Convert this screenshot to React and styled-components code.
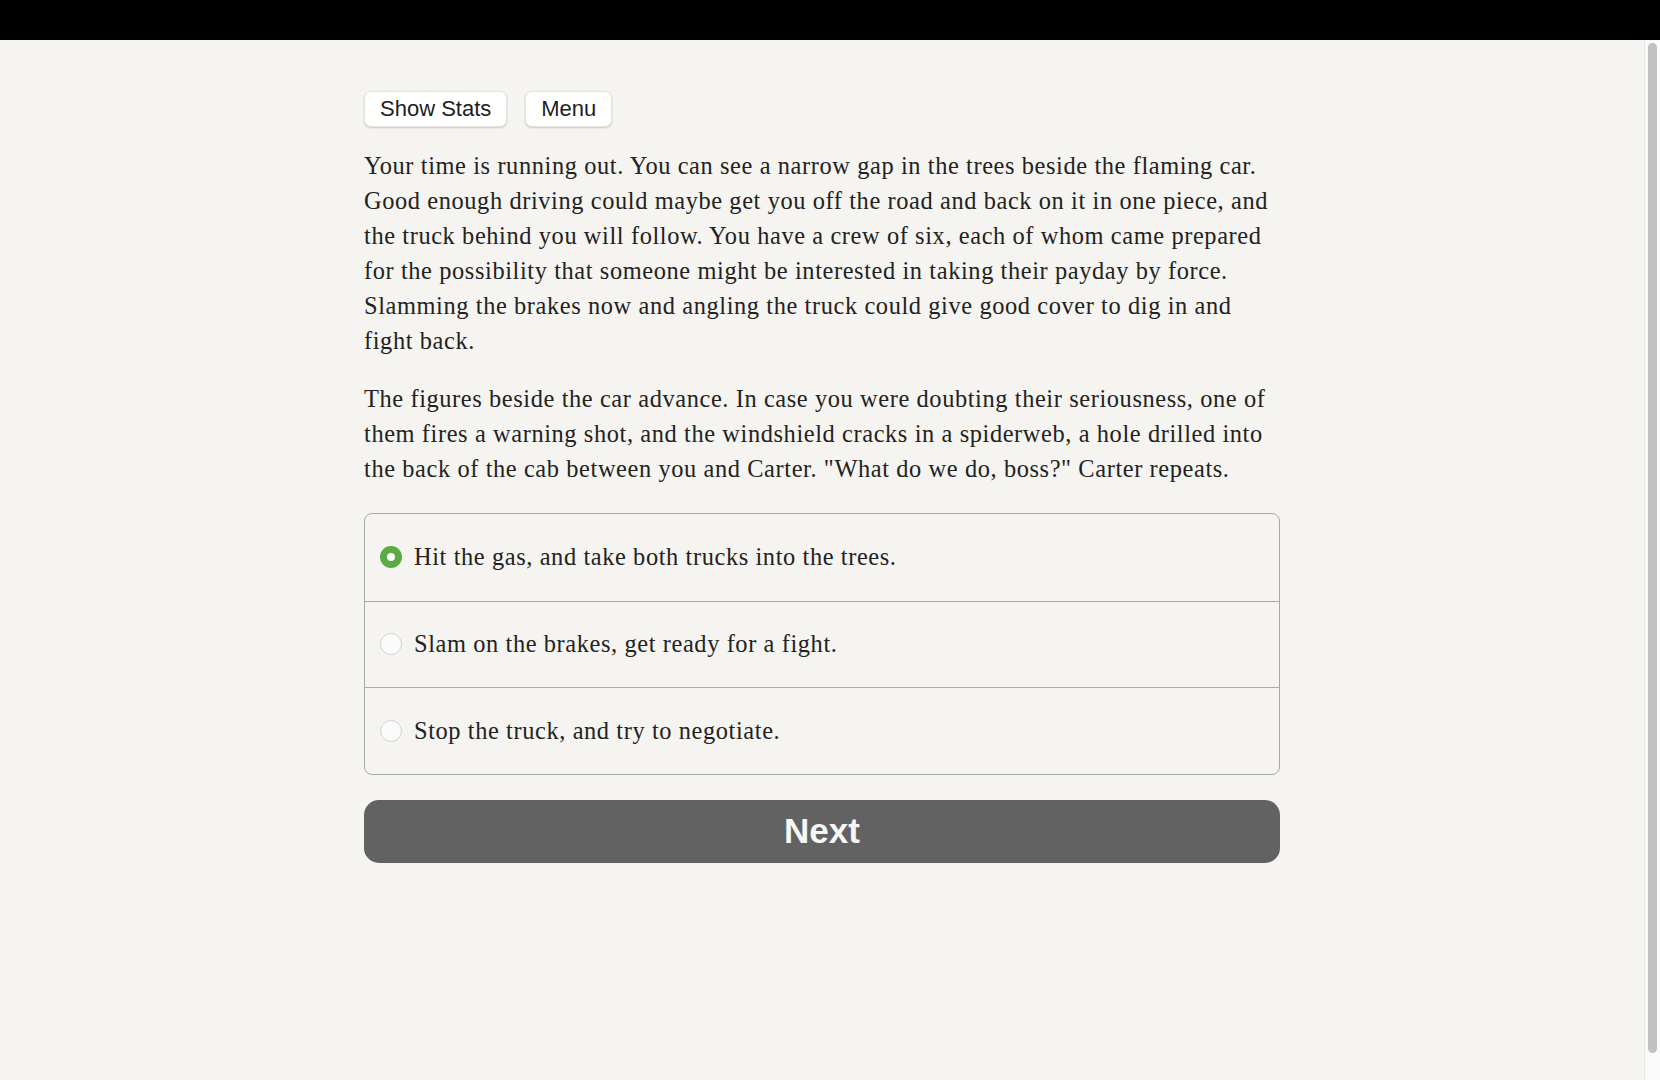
import React, { useState } from 'react';
import styled, { createGlobalStyle } from 'styled-components';

const GlobalStyle = createGlobalStyle`
  html, body {
    margin: 0;
    padding: 0;
    height: 100%;
    overflow: hidden;
    background: #000;
  }
  #root {
    height: 100%;
  }
`;

const Page = styled.div`
  display: flex;
  flex-direction: column;
  height: 100vh;
`;

const TopBar = styled.div`
  height: 40px;
  flex: none;
  background: #000;
`;

const Body = styled.div`
  flex: 1;
  display: flex;
  min-height: 0;
  background: #f5f4f0;
`;

const Scroller = styled.div`
  flex: 1;
  overflow: hidden;
`;

// drawn scrollbar, the headless browser hides native ones
const ScrollTrack = styled.div`
  width: 16px;
  flex: none;
  display: flex;
  box-sizing: border-box;
  padding: 3px 3px 27px 3px;
  background: #fafafa;
  border-left: 1px solid #e6e6e4;
`;

const ScrollThumb = styled.div`
  flex: 1;
  border-radius: 5px;
  background: #c1c1c1;
`;

const Column = styled.main`
  width: 916px;
  margin: 0 auto;
  padding-top: 51px;
  box-sizing: border-box;
`;

const Toolbar = styled.div`
  display: flex;
  gap: 18px;
  margin-bottom: 21px;
`;

const ToolButton = styled.button`
  height: 36px;
  padding: 0 15px;
  background: #fff;
  border: 1px solid #e4e3e0;
  border-radius: 7px;
  box-shadow: 0 1px 2px rgba(0, 0, 0, 0.18);
  font-family: "Liberation Sans", Arial, sans-serif;
  font-size: 22px;
  color: #1d1d1d;
  cursor: pointer;
`;

const Story = styled.div`
  font-family: "Liberation Serif", "Times New Roman", serif;
  font-size: 24.4px;
  letter-spacing: 0.6px;
  line-height: 35px;
  color: #222;
`;

const Para = styled.p`
  margin: 0 0 23px;
`;

const Choices = styled.div`
  border: 1px solid #a9a9a9;
  border-radius: 8px;
  margin-top: 27px;
  overflow: hidden;
`;

const Choice = styled.label`
  display: flex;
  align-items: center;
  gap: 12px;
  height: 86.5px;
  padding: 0 15px;
  box-sizing: border-box;
  cursor: pointer;
  font-family: "Liberation Serif", "Times New Roman", serif;
  font-size: 24.4px;
  letter-spacing: 0.6px;
  color: #222;

  & + & {
    border-top: 1px solid #a9a9a9;
  }
`;

const Radio = styled.span`
  width: 22px;
  height: 22px;
  flex: none;
  border-radius: 50%;
  box-sizing: border-box;
  background: ${p => (p.$checked ? '#fff' : '#fbfbfb')};
  border: ${p => (p.$checked ? '7px solid #5aab43' : '1px solid #d3d3d3')};
`;

const NextButton = styled.button`
  display: block;
  width: 100%;
  height: 63px;
  margin-top: 25px;
  border: none;
  border-radius: 15px;
  background: #626262;
  color: #f6f6f4;
  font-family: "Liberation Sans", Arial, sans-serif;
  font-weight: bold;
  font-size: 35px;
  cursor: pointer;
`;

const options = [
  'Hit the gas, and take both trucks into the trees.',
  'Slam on the brakes, get ready for a fight.',
  'Stop the truck, and try to negotiate.',
];

export default function App() {
  const [picked, setPicked] = useState(0);

  return (
    <>
      <GlobalStyle />
      <Page>
        <TopBar />
        <Body>
          <Scroller>
            <Column>
              <Toolbar>
                <ToolButton>Show Stats</ToolButton>
                <ToolButton>Menu</ToolButton>
              </Toolbar>
              <Story>
                <Para>
                  Your time is running out. You can see a narrow gap in the trees beside the flaming car.
                  Good enough driving could maybe get you off the road and back on it in one piece, and
                  the truck behind you will follow. You have a crew of six, each of whom came prepared
                  for the possibility that someone might be interested in taking their payday by force.
                  Slamming the brakes now and angling the truck could give good cover to dig in and
                  fight back.
                </Para>
                <Para>
                  The figures beside the car advance. In case you were doubting their seriousness, one of
                  them fires a warning shot, and the windshield cracks in a spiderweb, a hole drilled into
                  the back of the cab between you and Carter. "What do we do, boss?" Carter repeats.
                </Para>
              </Story>
              <Choices>
                {options.map((o, i) => (
                  <Choice key={i} onClick={() => setPicked(i)}>
                    <Radio $checked={picked === i} />
                    {o}
                  </Choice>
                ))}
              </Choices>
              <NextButton>Next</NextButton>
            </Column>
          </Scroller>
          <ScrollTrack>
            <ScrollThumb />
          </ScrollTrack>
        </Body>
      </Page>
    </>
  );
}
